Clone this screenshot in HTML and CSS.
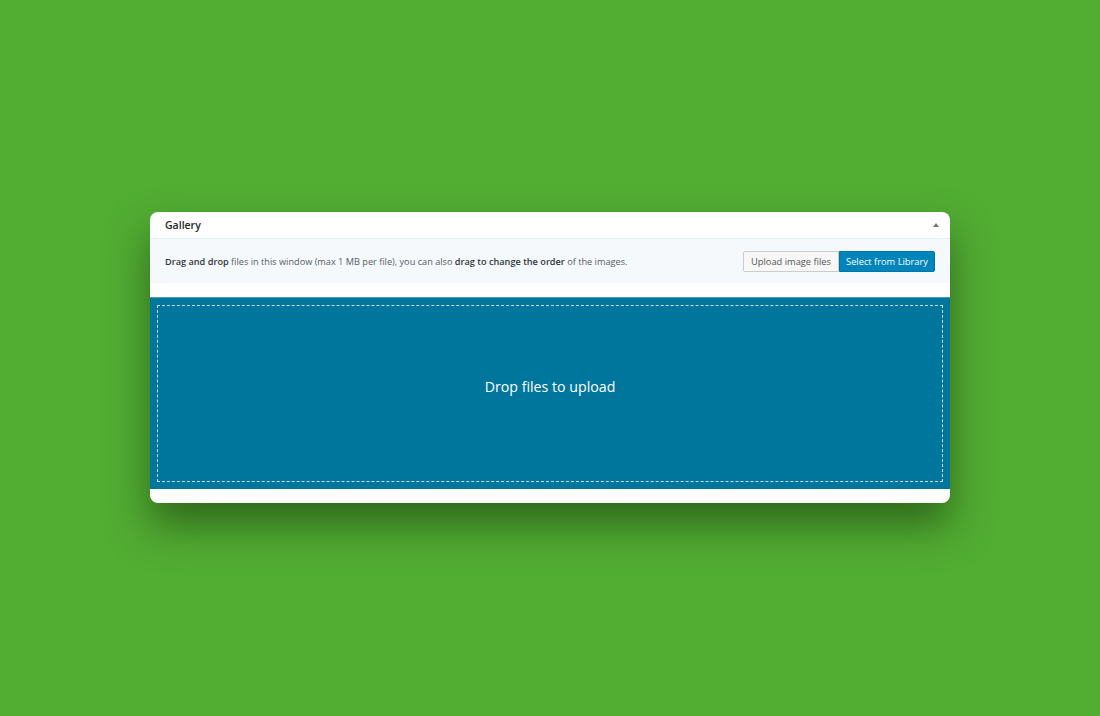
FILE: index.html
```html
<!DOCTYPE html>
<html>
<head>
<meta charset="utf-8">
<link rel="stylesheet" href="styles.css">
</head>
<body>
<div class="stage">
  <div class="card">
    <div class="card-head">
      <span class="title">Gallery</span>
      <span class="toggle"></span>
    </div>
    <div class="info">
      <p class="hint"><b>Drag and drop</b> files in this window (max 1 MB per file), you can also <b>drag to change the order</b> of the images.</p>
      <div class="btns">
        <button class="btn btn-light">Upload image files</button>
        <button class="btn btn-primary">Select from Library</button>
      </div>
    </div>
    <div class="gap"></div>
    <div class="drop">
      <div class="drop-inner">Drop files to upload</div>
    </div>
    <div class="foot"></div>
  </div>
</div>
</body>
</html>
```
FILE: styles.css
```css
* { box-sizing: border-box; }
html, body { margin: 0; padding: 0; }
body {
  width: 1100px;
  height: 716px;
  background: #52ad33;
  font-family: "Open Sans", "Noto Sans", sans-serif;
  overflow: hidden;
}
.stage {
  padding-top: 212px;
  display: flex;
  justify-content: center;
}
.card {
  width: 800px;
  background: #fff;
  border-radius: 8px;
  overflow: hidden;
  box-shadow: 0 22px 40px rgba(20, 50, 10, 0.55);
}
.card-head {
  height: 27px;
  border-bottom: 1px solid #e8eef2;
  display: flex;
  align-items: center;
  justify-content: space-between;
  padding: 0 11px 0 15px;
}
.title {
  font-size: 10.5px;
  font-weight: 600;
  color: #23282d;
}
.toggle {
  width: 0;
  height: 0;
  border-left: 3px solid transparent;
  border-right: 3px solid transparent;
  border-bottom: 4px solid #72777c;
}
.info {
  height: 44px;
  background: #f5f9fc;
  display: flex;
  align-items: center;
  justify-content: space-between;
  padding: 0 15px;
}
.hint {
  margin: 0;
  font-size: 9.18px;
  color: #555d66;
}
.hint b { font-weight: 600; color: #32373c; }
.btns { display: flex; }
.btn {
  font-family: inherit;
  font-size: 9.3px;
  height: 21px;
  margin: 0;
  padding: 0;
  white-space: nowrap;
  border-radius: 2px;
  cursor: pointer;
  text-align: center;
}
.btn-light {
  width: 96px;
  background: #f7f7f7;
  border: 1px solid #cccccc;
  color: #555;
  border-radius: 2px 0 0 2px;
}
.btn-primary {
  width: 96px;
  background: #0085ba;
  border: 1px solid #0073aa;
  color: #fff;
  border-radius: 0 2px 2px 0;
}
.gap { height: 14px; }
.drop {
  height: 192px;
  background: #00769c;
  border-top: 1px solid #4a9ab8;
  padding: 7px;
}
.drop-inner {
  height: 100%;
  border: 1px dashed #c6dbe6;
  display: flex;
  align-items: center;
  justify-content: center;
  padding-bottom: 14px;
  color: #fff;
  font-size: 14.2px;
}
.foot { height: 14px; }
```
